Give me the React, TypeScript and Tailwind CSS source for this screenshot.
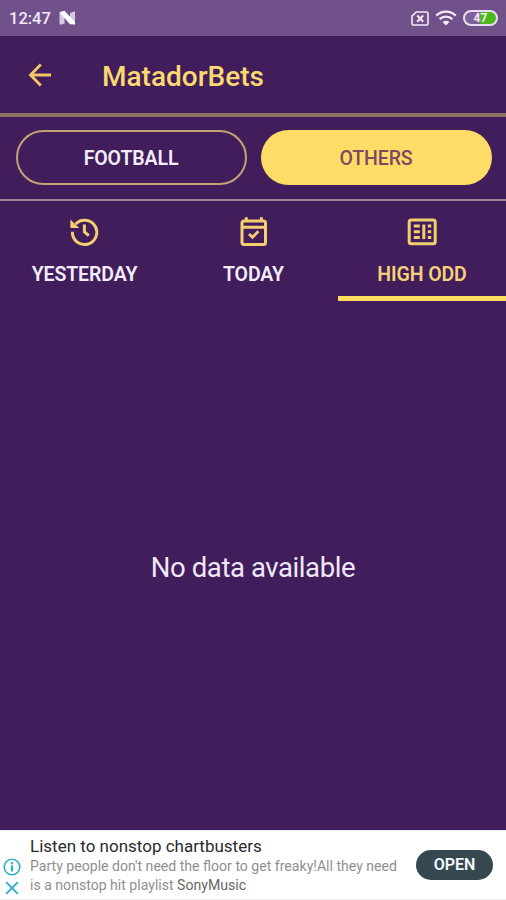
import type { ReactNode } from "react";

const HistoryIcon = () => (
  <svg className="size-8" viewBox="0 0 32 32" fill="none" stroke="#f3d06f" strokeWidth="3">
    <path d="M3.4 15.8A12.2 12.2 0 1 0 6.6 8.1" />
    <path d="M1.4 3.4V12H10.2Z" fill="#f3d06f" stroke="none" />
    <path d="M15.4 8.6V15.8L19.8 19.6" />
  </svg>
);

const CalendarIcon = () => (
  <svg className="size-8" viewBox="0 0 32 32" fill="none" stroke="#f3d06f" strokeWidth="3">
    <rect x="4" y="5" width="23.5" height="23.5" rx="2" />
    <path d="M4 11.3H27.5M8.3 1.2V6M23.4 1.2V6" />
    <path d="M11 17.9L14.4 21.3L20.4 15.3" strokeWidth="2.8" />
  </svg>
);

const BallotIcon = () => (
  <svg className="size-8" viewBox="0 0 32 32" fill="none" stroke="#f3d06f" strokeWidth="3">
    <rect x="3.2" y="4" width="26" height="23.7" rx="2" />
    <path d="M7.8 10H13.8M7.8 15.8H13.8M7.8 21.6H13.8M21.8 10H25.2M21.8 15.8H25.2M21.8 21.6H25.2" strokeWidth="3" />
    <path d="M17.8 8.5V23.1" strokeWidth="3" />
  </svg>
);

interface TabProps {
  label: string;
  icon: ReactNode;
  active?: boolean;
}

const Tab: React.FC<TabProps> = ({ label, icon, active }) => {
  return (
    <button
      className={`flex flex-col items-center border-b-[5px] pt-[15px] text-[19.5px] font-semibold leading-6 tracking-[-0.1px] ${
        active
          ? "border-[#fedc60] text-[#f3d27b]"
          : "border-transparent text-[#f3edfa]"
      }`}
    >
      {icon}
      <span className="mt-[15px] whitespace-nowrap">{label}</span>
    </button>
  );
};

const StatusBar = () => (
  <div className="flex h-9 shrink-0 items-center bg-[#70518a] pl-[9px] pr-2 text-[#f4eafa]">
    <span className="mt-0.5 text-[16.5px] font-medium">12:47</span>
    <svg className="ml-[8px] h-4 w-[17px]" viewBox="0 0 17 16">
      <path d="M0.5 2.2L5.5 0.8V13.7L0.5 14.7Z" fill="#d8c8e2" />
      <path d="M11 3L16 1.2V14.5L11 12.8Z" fill="#d8c8e2" />
      <path d="M0.5 2.2L5.5 0.8L16 12.2V14.5L11 14.2Z" fill="#fff" />
    </svg>
    <div className="ml-auto flex items-center">
      <svg className="h-[15px] w-[18px]" viewBox="0 0 18 15" fill="none" stroke="currentColor" strokeWidth="1.6">
        <path d="M5.2 1H15.5A1.5 1.5 0 0 1 17 2.5V12.5A1.5 1.5 0 0 1 15.5 14H2.5A1.5 1.5 0 0 1 1 12.5V5.2Z" />
        <path d="M6.2 4.5L12.2 10.8M12.2 4.5L6.2 10.8" strokeWidth="2" />
      </svg>
      <svg className="ml-[6px] h-4 w-[22px]" viewBox="0 0 22 16" fill="none" stroke="currentColor" strokeWidth="2.3">
        <path d="M1.2 5.6C6.8 .2 15.2 .2 20.8 5.6M4.6 9.1C8.3 5.7 13.7 5.7 17.4 9.1" />
        <path d="M7.5 12C9.6 10.3 12.4 10.3 14.5 12L11 15.5Z" fill="currentColor" stroke="none" />
      </svg>
      <div className="ml-[6px] flex h-4 w-[35px] items-center justify-center rounded-full border-2 border-[#eadcf3] bg-linear-to-r from-[#80629a] from-48% to-[#48b91a] to-48% text-[12px] font-bold leading-none">
        47
      </div>
    </div>
  </div>
);

const AdBanner = () => (
  <div className="flex h-[70px] shrink-0 items-start border-y border-[#eeeeee] bg-white text-[#8f8f8f]">
    <div className="flex w-[30px] flex-col items-start pl-[3px] pt-[27px]">
      <svg className="size-[18px]" viewBox="0 0 18 18" fill="none" stroke="#2aaed0" strokeWidth="1.6">
        <circle cx="9" cy="9" r="7.8" />
        <path d="M9 7.5V13.5M9 4.2V6.2" strokeWidth="2.2" />
      </svg>
      <svg className="ml-[2px] mt-[5px] size-[14px]" viewBox="0 0 14 14" fill="none" stroke="#2aaed0" strokeWidth="1.9">
        <path d="M1.2 1.2L12.8 12.8M12.8 1.2L1.2 12.8" />
      </svg>
    </div>
    <div className="whitespace-nowrap pt-[5px]">
      <h2 className="text-[17px] leading-5 text-[#2b2b2f]">
        Listen to nonstop chartbusters
      </h2>
      <p className="mt-px text-[14.08px] leading-[19px]">
        Party people don't need the floor to get freaky!All they need
        <br />
        is a nonstop hit playlist <span className="text-[#666666]">SonyMusic</span>
      </p>
    </div>
    <button className="ml-auto mr-[13px] mt-[19px] h-[30px] w-[77px] rounded-full bg-[#35474f] text-[16px] font-semibold leading-none text-[#f7fafb]">
      OPEN
    </button>
  </div>
);

export default function App() {
  return (
    <div className="flex h-[900px] w-[506px] flex-col overflow-hidden bg-[#411d5c] font-[Roboto,sans-serif]">
      <StatusBar />
      <header className="flex h-[81px] shrink-0 items-center border-b-4 border-[#8c7062] pl-[28px] text-[#fbd971]">
        <svg className="size-6" viewBox="0 0 24 24" fill="none" stroke="#f0c867" strokeWidth="2.8">
          <path d="M23 12H2.5M12.8 1.5L2.5 12L12.8 22.5" />
        </svg>
        <h1 className="ml-[50px] pt-[5px] text-[28px] font-medium">MatadorBets</h1>
      </header>
      <div className="grid h-[84px] shrink-0 grid-cols-2 gap-[14px] border-b-2 border-[#9d7f91] pl-[15.5px] pr-[14.5px] pt-[13px] text-[19.5px]">
        <button className="h-[55px] rounded-full border-2 border-[#c5a272] pt-0.5 font-semibold tracking-[-0.1px] text-[#f3edfa]">
          FOOTBALL
        </button>
        <button className="h-[55px] rounded-full bg-[#fedc66] pt-0.5 font-medium tracking-[-0.1px] text-[#7c4a60]">
          OTHERS
        </button>
      </div>
      <nav className="grid h-[100px] shrink-0 grid-cols-[169px_169px_168px]">
        <Tab label="YESTERDAY" icon={<HistoryIcon />} />
        <Tab label="TODAY" icon={<CalendarIcon />} />
        <Tab label="HIGH ODD" icon={<BallotIcon />} active />
      </nav>
      <main className="flex flex-1 items-center justify-center pt-1 text-[27.5px] tracking-[-0.41px] text-[#efe8f6]">
        No data available
      </main>
      <AdBanner />
    </div>
  );
}
